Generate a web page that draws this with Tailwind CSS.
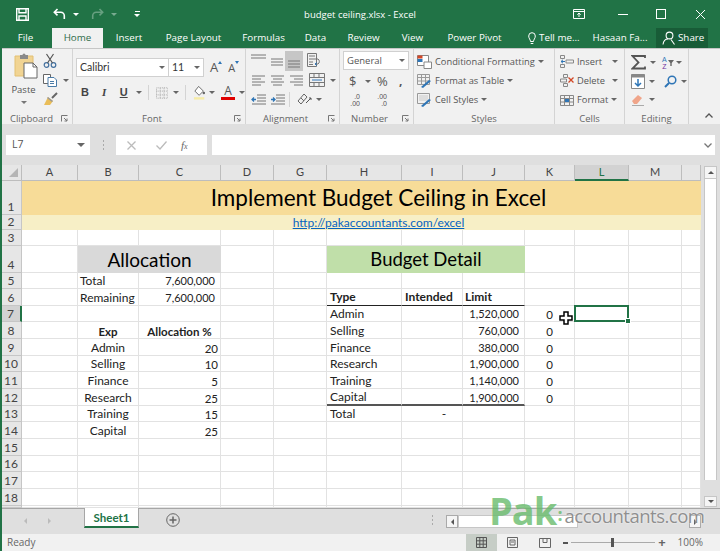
<!DOCTYPE html>
<html lang="en">
<head>
  <meta charset="UTF-8" />
  <title>budget ceiling.xlsx - Excel</title>
  <script src="https://cdn.jsdelivr.net/npm/@tailwindcss/browser@4"></script>
</head>
<body class="bg-white">
<div class="relative w-[720px] h-[551px] overflow-hidden flex flex-col border-l-2 border-[#217346] font-['Open_Sans',sans-serif] text-[#444]">

  <!-- Title bar -->
  <div class="h-[28px] -ml-[2px] bg-[#217346] grid grid-cols-[1fr_auto_1fr] items-center text-white">
    <div class="flex items-center pl-[16px]">
      <svg width="13" height="13" viewBox="0 0 13 13" fill="none" stroke="#fff" stroke-width="1.4"><path d="M.7.7h11.6v11.6H.7z"/><path d="M3 .7v4h7v-4M3 12.3V8h7v4.3"/></svg>
      <svg class="ml-[24px]" width="13" height="12" viewBox="0 0 13 12" fill="none" stroke="#fff" stroke-width="1.6"><path d="M4.5 1 1.3 4.2l3.2 3.2M1.5 4.2h6.3a3.5 3.5 0 0 1 3.5 3.5V11"/></svg>
      <i class="block ml-[7px] w-0 h-0 border-x-[3px] border-t-[3px] border-x-transparent border-t-white"></i>
      <svg class="ml-[12px] opacity-40" width="13" height="12" viewBox="0 0 13 12" fill="none" stroke="#cfe3d7" stroke-width="1.6"><path d="M8.5 1l3.2 3.2-3.2 3.2M11.5 4.2H5.2a3.5 3.5 0 0 0-3.5 3.5V11"/></svg>
      <i class="block ml-[7px] w-0 h-0 border-x-[3px] border-t-[3px] border-x-transparent border-t-white/40"></i>
      <div class="ml-[17px] flex flex-col items-center gap-[2px]"><i class="block w-[5px] h-px bg-white"></i><i class="block w-0 h-0 border-x-[3px] border-t-[3px] border-x-transparent border-t-white"></i></div>
    </div>
    <div class="text-[9.5px] leading-none pt-[2px]">budget ceiling.xlsx - Excel</div>
    <div class="flex items-center justify-end pr-[14px]">
      <svg width="12" height="10" viewBox="0 0 12 10" fill="none" stroke="#fff"><path d="M.5.5h11v9H.5zM.5 2.500h11M6 8V4M4.300 5.700 6 4l1.700 1.700"/></svg>
      <i class="block ml-[33px] w-[10px] h-px bg-white"></i>
      <i class="block ml-[28px] w-[10px] h-[10px] border border-white"></i>
      <svg class="ml-[29px]" width="11" height="11" viewBox="0 0 11 11" stroke="#fff"><path d="M1 1l9 9M10 1l-9 9"/></svg>
    </div>
  </div>

  <!-- Ribbon tabs -->
  <div class="h-[20px] -ml-[2px] bg-[#217346] flex items-stretch text-white text-[9.8px] leading-[20px]">
    <div class="w-[50px] pl-[1px] text-center">File</div>
    <div class="w-[51px] ml-[2px] bg-[#f1f1f1] text-[#2f6b4a] text-center">Home</div>
    <div class="w-[50px] ml-[1px] text-center">Insert</div>
    <div class="w-[77px] ml-[1px] text-center">Page Layout</div>
    <div class="w-[59px] ml-[2px] text-center">Formulas</div>
    <div class="w-[45px] text-center">Data</div>
    <div class="w-[49px] ml-[1px] text-center">Review</div>
    <div class="w-[47px] ml-[1px] text-center">View</div>
    <div class="w-[75px] ml-[1px] text-center">Power Pivot</div>
    <div class="w-[69px] ml-[2px] flex items-center gap-[3px] pl-[14px]">
      <svg class="shrink-0" width="8" height="13" viewBox="0 0 8 13" fill="none" stroke="#fff"><path d="M2.5 9.5C2.5 7.5.7 6.500.7 4a3.300 3.300 0 0 1 6.600 0c0 2.500-1.800 3.500-1.800 5.500zM2.700 11.500h2.600"/></svg>
      <span class="whitespace-nowrap">Tell me...</span>
    </div>
    <div class="w-[73px] pl-[1px] text-center whitespace-nowrap">Hasaan Fa...</div>
    <div class="w-[52px] bg-[#185c37] flex items-center pl-[6px] gap-[2px]">
      <svg class="shrink-0" width="14" height="14" viewBox="0 0 14 14" fill="none" stroke="#fff" stroke-width="1.100"><circle cx="7.500" cy="4.500" r="3.400"/><path d="M1 13.500c.5-3.500 2.500-5.500 5-5.500M9 8.500l3.500 5"/></svg>
      <span>Share</span>
    </div>
  </div>

  <!-- Ribbon -->
  <div class="h-[76px] bg-[#f1f1f1] border-t border-[#c6c6c6] flex text-[9.5px] leading-none">

    <!-- Clipboard -->
    <div class="relative w-[71px] pt-[4px] border-r border-[#d4d4d4] flex flex-col">
      <div class="h-[61px] flex pl-[10px]">
        <div class="w-[28px] flex flex-col items-center">
          <svg width="24" height="26" viewBox="0 0 24 26"><path d="M1 3h18v20H1z" fill="#f1d493" stroke="#e3c072"/><path d="M6 2h2.500a1.500 1.500 0 0 1 3 0H14v4H6z" fill="#8a8a8a"/><path d="M10 10h9l4 4v11H10z" fill="#fff" stroke="#666"/><path d="M19 10v4h4" fill="none" stroke="#666"/></svg>
          <span class="mt-[6px] -ml-[5px] text-[9.5px] text-[#555]">Paste</span>
          <i class="block mt-[6px] -ml-[5px] w-0 h-0 border-x-[3px] border-t-[3px] border-x-transparent border-t-[#777]"></i>
        </div>
        <div class="ml-[3px] flex flex-col gap-[5px]">
          <svg width="14" height="15" viewBox="0 0 14 15" fill="none" stroke="#44719f" stroke-width="1.200"><circle cx="3.500" cy="12" r="2.300"/><circle cx="10.500" cy="12" r="2.300"/><path d="M4.500 10 10.500 1M9.500 10 3.500 1" stroke="#555"/></svg>
          <div class="flex items-center gap-[6px]">
            <svg width="14" height="14" viewBox="0 0 14 14" fill="#fff" stroke="#666"><path d="M.5 1.500h7v9h-7z"/><path d="M5 4.500h6l2.500 2.500v6.500H5z" stroke="#4a7ba7"/><path d="M7 8.500h4M7 10.500h4" stroke="#4a7ba7"/></svg>
            <i class="block w-0 h-0 border-x-[3px] border-t-[3px] border-x-transparent border-t-[#666]"></i>
          </div>
          <svg width="15" height="14" viewBox="0 0 15 14"><path d="M14 1 9 6" stroke="#666" stroke-width="2"/><path d="M5 5l5 4-3 4H1z" fill="#e9bd59"/><path d="M5 5l5 4-1 1-5-4z" fill="#999"/></svg>
        </div>
      </div>
      <div class="text-center text-[#666] pr-[11px]">Clipboard</div>
      <svg class="absolute right-[4px] bottom-[2px]" width="7" height="7" viewBox="0 0 7 7" fill="none" stroke="#777"><path d="M.5 6.500v-6h6M3 3l3 3M6 3.500V6H3.500"/></svg>
    </div>

    <!-- Font -->
    <div class="relative w-[173px] border-r border-[#d4d4d4] flex flex-col">
      <div class="h-[65px] flex flex-col">
        <div class="flex items-center mt-[9px] pl-[3px]">
          <div class="w-[93px] h-[19px] bg-white border border-[#d0d0d0] flex items-center justify-between pl-[3px] pr-[3px] font-['Lato',sans-serif] text-[10.5px] text-[#333]">
            <span>Calibri</span><i class="block w-0 h-0 border-x-[3px] border-t-[3px] border-x-transparent border-t-[#666]"></i>
          </div>
          <div class="w-[35px] h-[19px] bg-white border-y border-r border-[#d0d0d0] flex items-center justify-between pl-[3px] pr-[3px] font-['Lato',sans-serif] text-[10.5px] text-[#333]">
            <span>11</span><i class="block w-0 h-0 border-x-[3px] border-t-[3px] border-x-transparent border-t-[#666]"></i>
          </div>
          <span class="ml-[6px] relative text-[13px] text-[#555]">A<i class="absolute -right-[4px] top-[0px] w-0 h-0 border-x-[2px] border-b-[3px] border-x-transparent border-b-[#2e75b6]"></i></span>
          <span class="ml-[10px] relative text-[11px] text-[#555]">A<i class="absolute -right-[4px] top-[-1px] w-0 h-0 border-x-[2px] border-t-[3px] border-x-transparent border-t-[#2e75b6]"></i></span>
        </div>
        <div class="flex items-center mt-[7px] h-[17px] text-[#444] text-[11px] font-['Liberation_Sans',sans-serif]">
          <b class="ml-[8px] w-[7px]">B</b>
          <i class="ml-[14px] w-[5px] font-['Liberation_Serif',serif] font-bold">I</i>
          <u class="ml-[13px] w-[8px] font-bold">U</u>
          <i class="block ml-[8px] w-0 h-0 border-x-[3px] border-t-[3px] border-x-transparent border-t-[#666]"></i>
          <i class="block ml-[6px] w-px h-[15px] bg-[#d4d4d4]"></i>
          <svg class="ml-[7px]" width="13" height="12" viewBox="0 0 13 12" fill="none" stroke="#aaa" stroke-dasharray="1 1"><path d="M.5.500h12v11H.5zM4.500.5v11M8.500.5v11M.5 4h12M.5 8h12"/></svg>
          <i class="block ml-[5px] w-0 h-0 border-x-[3px] border-t-[3px] border-x-transparent border-t-[#666]"></i>
          <i class="block ml-[6px] w-px h-[15px] bg-[#d4d4d4]"></i>
          <svg class="ml-[7px]" width="13" height="15" viewBox="0 0 13 15"><path d="M6 1l5 5-4.500 4.500L2 6z" fill="#fff" stroke="#666"/><circle cx="11.500" cy="8" r="1.300" fill="#666"/><path d="M1 12.500h11V15H1z" fill="#f7eca6"/></svg>
          <i class="block ml-[4px] w-0 h-0 border-x-[3px] border-t-[3px] border-x-transparent border-t-[#666]"></i>
          <div class="ml-[6px] w-[14px] h-[15px] flex flex-col items-center justify-between font-['Open_Sans',sans-serif] text-[12px] leading-[12px] text-[#555]"><span>A</span><i class="block w-[14px] h-[3px] bg-[#e00000]"></i></div>
          <i class="block ml-[4px] w-0 h-0 border-x-[3px] border-t-[3px] border-x-transparent border-t-[#666]"></i>
        </div>
      </div>
      <div class="text-center text-[#666] pr-[14px]">Font</div>
      <svg class="absolute right-[4px] bottom-[2px]" width="7" height="7" viewBox="0 0 7 7" fill="none" stroke="#777"><path d="M.5 6.500v-6h6M3 3l3 3M6 3.500V6H3.500"/></svg>
    </div>

    <!-- Alignment -->
    <div class="relative w-[94px] border-r border-[#d4d4d4] flex flex-col">
      <div class="h-[65px] flex flex-col pl-[5px] pt-[2px]">
        <div class="flex items-start h-[19px]">
          <svg class="mt-[3px]" width="15" height="9" viewBox="0 0 15 9" stroke="#777"><path d="M0 1h15M0 4h15"/></svg>
          <svg class="ml-[4px] mt-[7px]" width="14" height="8" viewBox="0 0 14 8" stroke="#777"><path d="M1 1h12M1 4h12M1 7h12"/></svg>
          <div class="ml-[1px] w-[18px] h-[20px] bg-[#c6c6c6] flex items-end justify-center pb-[3px]"><svg width="14" height="8" viewBox="0 0 14 8" stroke="#777"><path d="M1 1h12M1 4h12M1 7h12"/></svg></div>
          <svg class="ml-[4px] mt-[2px]" width="16" height="14" viewBox="0 0 16 14" fill="none"><path d="M.5.500h9v13h-9z" stroke="#777"/><path d="M2 3h6M2 6h9a3 3 0 0 1 0 5H8M2 9h4M2 11.500h4" stroke="#777"/><path d="M10 9.500l-2 1.500 2 1.500" stroke="#2e75b6"/></svg>
        </div>
        <div class="flex items-center h-[20px]">
          <svg width="15" height="11" viewBox="0 0 15 11" stroke="#777"><path d="M1 1h13M1 4h9M1 7h13M1 10h9"/></svg>
          <svg class="ml-[4px]" width="15" height="11" viewBox="0 0 15 11" stroke="#777"><path d="M1 1h13M3 4h9M1 7h13M3 10h9"/></svg>
          <svg class="ml-[4px]" width="15" height="11" viewBox="0 0 15 11" stroke="#777"><path d="M1 1h13M5 4h9M1 7h13M5 10h9"/></svg>
          <svg class="ml-[5px]" width="16" height="14" viewBox="0 0 16 14" fill="none" stroke="#777"><path d="M.5.500h15v13H.5zM.5 4.500h15M.5 9.500h15M5 .5v4M10 .5v4M5 9.500v4M10 9.500v4"/><path d="M3 7h10" stroke="#2e75b6"/></svg>
          <i class="block ml-[5px] w-0 h-0 border-x-[3px] border-t-[3px] border-x-transparent border-t-[#666]"></i>
        </div>
        <div class="flex items-center h-[18px]">
          <svg width="15" height="11" viewBox="0 0 15 11"><path d="M6 1h9M6 4h9M6 7h9M1 10h14" stroke="#777"/><path d="M5 5.500H1M3 3.500 1 5.500l2 2" fill="none" stroke="#2e75b6" stroke-width="1.300"/></svg>
          <svg class="ml-[4px]" width="15" height="11" viewBox="0 0 15 11"><path d="M6 1h9M6 4h9M6 7h9M1 10h14" stroke="#777"/><path d="M1 5.500h4M3 3.500l2 2-2 2" fill="none" stroke="#2e75b6" stroke-width="1.300"/></svg>
          <i class="block ml-[4px] w-px h-[15px] bg-[#d4d4d4]"></i>
          <svg class="ml-[7px]" width="15" height="14" viewBox="0 0 15 14" fill="none" stroke="#666"><path d="M1 9l6-7 3 3-6 7zM4 6l3 3"/><path d="M9 11l5-5M12 6h2v2" stroke="#555"/></svg>
          <i class="block ml-[4px] w-0 h-0 border-x-[3px] border-t-[3px] border-x-transparent border-t-[#666]"></i>
        </div>
      </div>
      <div class="text-center text-[#666] pr-[14px]">Alignment</div>
      <svg class="absolute right-[4px] bottom-[2px]" width="7" height="7" viewBox="0 0 7 7" fill="none" stroke="#777"><path d="M.5 6.500v-6h6M3 3l3 3M6 3.500V6H3.500"/></svg>
    </div>

    <!-- Number -->
    <div class="relative w-[74px] border-r border-[#d4d4d4] flex flex-col">
      <div class="h-[65px] flex flex-col pl-[3px]">
        <div class="mt-[2px] w-[66px] h-[19px] bg-white border border-[#d0d0d0] flex items-center justify-between pl-[3px] pr-[3px] text-[9.5px] text-[#555]">
          <span>General</span><i class="block w-0 h-0 border-x-[3px] border-t-[3px] border-x-transparent border-t-[#666]"></i>
        </div>
        <div class="flex items-center h-[20px] mt-[1px] text-[#555]">
          <span class="ml-[6px] w-[9px] text-[13px]">$</span>
          <i class="block ml-[7px] w-0 h-0 border-x-[3px] border-t-[3px] border-x-transparent border-t-[#666]"></i>
          <span class="ml-[6px] w-[15px] text-[13px]">%</span>
          <b class="ml-[7px] text-[12px] leading-[8px]">,</b>
        </div>
        <div class="flex items-center h-[17px] font-['Liberation_Sans',sans-serif] text-[7px] leading-[7px] text-[#555]">
          <div class="ml-[3px] flex flex-col items-end w-[14px]"><span>.0</span><span>.00</span></div>
          <div class="ml-[13px] flex flex-col items-end w-[14px]"><span>.00</span><span>.0</span></div>
        </div>
      </div>
      <div class="text-center text-[#666] pr-[14px]">Number</div>
      <svg class="absolute right-[4px] bottom-[2px]" width="7" height="7" viewBox="0 0 7 7" fill="none" stroke="#777"><path d="M.5 6.500v-6h6M3 3l3 3M6 3.500V6H3.500"/></svg>
    </div>

    <!-- Styles -->
    <div class="w-[141px] border-r border-[#d4d4d4] flex flex-col">
      <div class="h-[65px] flex flex-col pl-[3px] pt-[3px] text-[9.3px] text-[#555]">
        <div class="flex items-center h-[19px] gap-[3px]">
          <svg width="15" height="14" viewBox="0 0 15 14" fill="#fff" stroke="#888"><path d="M.5.500h11v10H.5z"/><path d="M.5.500h5v3h-5z" fill="#d24726" stroke="none"/><path d="M.5 4h5v3h-5z" fill="#2e75b6" stroke="none"/><path d="M7 7h7.500v6.500H7z"/></svg>
          <span class="whitespace-nowrap">Conditional Formatting</span>
          <i class="block w-0 h-0 border-x-[3px] border-t-[3px] border-x-transparent border-t-[#666]"></i>
        </div>
        <div class="flex items-center h-[19px] gap-[3px]">
          <svg width="15" height="14" viewBox="0 0 15 14" fill="none" stroke="#999"><path d="M.5.500h12v10H.5zM.5 3.500h12M.5 7h12M4.500.5v10M8.500.5v10"/><path d="M4 13l8-7 2 1-8 7z" fill="#2e75b6" stroke="none"/></svg>
          <span class="whitespace-nowrap">Format as Table</span>
          <i class="block w-0 h-0 border-x-[3px] border-t-[3px] border-x-transparent border-t-[#666]"></i>
        </div>
        <div class="flex items-center h-[19px] gap-[3px]">
          <svg width="15" height="14" viewBox="0 0 15 14" fill="none" stroke="#999"><path d="M.5.500h12v10H.5z"/><path d="M2 2h9v6H2z" fill="#ddd" stroke="none"/><path d="M4 13l8-7 2 1-8 7z" fill="#2e75b6" stroke="none"/></svg>
          <span class="whitespace-nowrap">Cell Styles</span>
          <i class="block w-0 h-0 border-x-[3px] border-t-[3px] border-x-transparent border-t-[#666]"></i>
        </div>
      </div>
      <div class="text-center text-[#666]">Styles</div>
    </div>

    <!-- Cells -->
    <div class="w-[70px] border-r border-[#d4d4d4] flex flex-col">
      <div class="h-[65px] flex flex-col pl-[5px] pt-[3px] text-[9.3px] text-[#555]">
        <div class="flex items-center h-[19px] gap-[3px]">
          <svg width="14" height="13" viewBox="0 0 14 13" fill="none" stroke="#888"><path d="M.5.500h4v3h-4zM.5 9.500h4v3h-4zM6 5h7.500v3H6z"/><path d="M1 6.500h4M3 4.800 1 6.500l2 1.700" stroke="#2e75b6"/></svg>
          <span class="w-[32px]">Insert</span>
          <i class="block w-0 h-0 border-x-[3px] border-t-[3px] border-x-transparent border-t-[#666]"></i>
        </div>
        <div class="flex items-center h-[19px] gap-[3px]">
          <svg width="14" height="13" viewBox="0 0 14 13" fill="none" stroke="#888"><path d="M3.500.5h4v3h-4zM3.500 9.500h4v3h-4zM.5 5h6v3h-6z"/><path d="M8.500 3.500l5 5M13.500 3.500l-5 5" stroke="#d24726" stroke-width="1.300"/></svg>
          <span class="w-[32px]">Delete</span>
          <i class="block w-0 h-0 border-x-[3px] border-t-[3px] border-x-transparent border-t-[#666]"></i>
        </div>
        <div class="flex items-center h-[19px] gap-[3px]">
          <svg width="14" height="13" viewBox="0 0 14 13" fill="none" stroke="#888"><path d="M.5 2.500h13v10H.5zM.5 5.500h13M.5 9h13M4.500 2.500v10M9.500 2.500v10"/><path d="M5 6h4v3H5z" fill="#2e75b6" stroke="none"/></svg>
          <span>Format</span>
          <i class="block w-0 h-0 border-x-[3px] border-t-[3px] border-x-transparent border-t-[#666]"></i>
        </div>
      </div>
      <div class="text-center text-[#666]">Cells</div>
    </div>

    <!-- Editing -->
    <div class="w-[64px] border-r border-[#d4d4d4] flex flex-col">
      <div class="h-[65px] flex flex-col pl-[6px] pt-[4px]">
        <div class="flex items-center h-[19px]">
          <svg width="15" height="15" viewBox="0 0 15 15" fill="none" stroke="#555" stroke-width="1.800"><path d="M14 3V1H1.500l6 6.500-6 6H14v-2"/></svg>
          <i class="block ml-[4px] w-0 h-0 border-x-[3px] border-t-[3px] border-x-transparent border-t-[#666]"></i>
          <div class="ml-[6px] flex flex-col items-center font-['Liberation_Sans',sans-serif] text-[7px] leading-[7px]"><span class="text-[#2e75b6]">A</span><span class="text-[#7030a0]">Z</span></div>
          <svg class="ml-[1px]" width="6" height="6" viewBox="0 0 6 6" fill="#666"><path d="M0 0h6L3.700 3v3H2.300V3z"/></svg>
          <i class="block ml-[2px] w-0 h-0 border-x-[3px] border-t-[3px] border-x-transparent border-t-[#666]"></i>
        </div>
        <div class="flex items-center h-[19px]">
          <svg width="14" height="15" viewBox="0 0 14 15"><path d="M.5.500h13v14H.5z" fill="#fff" stroke="#888"/><path d="M.5.500h13v3H.5z" fill="#888"/><path d="M7 5v7M4 9l3 3 3-3" fill="none" stroke="#2e75b6" stroke-width="1.500"/></svg>
          <i class="block ml-[4px] w-0 h-0 border-x-[3px] border-t-[3px] border-x-transparent border-t-[#666]"></i>
          <svg class="ml-[9px]" width="13" height="13" viewBox="0 0 13 13" fill="none" stroke="#2e75b6" stroke-width="1.500"><circle cx="8" cy="5" r="3.800"/><path d="M5 8l-4 4" stroke-width="2"/></svg>
          <i class="block ml-[4px] w-0 h-0 border-x-[3px] border-t-[3px] border-x-transparent border-t-[#666]"></i>
        </div>
        <div class="flex items-center h-[17px]">
          <svg width="14" height="13" viewBox="0 0 14 13"><path d="M1 8l6-6 4 3-5 6H3z" fill="#f0a58a"/><path d="M1 12.500h12" stroke="#aaa"/></svg>
          <i class="block ml-[4px] w-0 h-0 border-x-[3px] border-t-[3px] border-x-transparent border-t-[#666]"></i>
        </div>
      </div>
      <div class="text-center text-[#666]">Editing</div>
    </div>
    <div class="flex-1 flex items-end justify-center pb-[6px] pl-[8px]">
      <svg width="8" height="5" viewBox="0 0 8 5" fill="none" stroke="#555" stroke-width="1.300"><path d="M.5 4.500 4 1l3.500 3.500"/></svg>
    </div>
  </div>

  <!-- Formula bar -->
  <div class="h-[41px] bg-[#dfdfdf] flex items-start pt-[11px] pl-[4px]">
    <div class="w-[84px] h-[20px] bg-white flex items-center justify-between pl-[6px] pr-[5px] text-[10.500px] text-[#555]">
      <span>L7</span><i class="block w-0 h-0 border-x-[4px] border-t-[4px] border-x-transparent border-t-[#666]"></i>
    </div>
    <div class="w-[26px] h-[20px] flex flex-col items-center justify-center gap-[2px]">
      <i class="block w-[1px] h-[2px] bg-[#aaa]"></i><i class="block w-[1px] h-[2px] bg-[#aaa]"></i><i class="block w-[1px] h-[2px] bg-[#aaa]"></i>
    </div>
    <div class="w-[91px] h-[20px] bg-white flex items-center pl-[11px]">
      <svg width="9" height="9" viewBox="0 0 9 9" stroke="#bbb" stroke-width="1.300"><path d="M.5.500l8 8M8.500.5l-8 8"/></svg>
      <svg class="ml-[20px]" width="11" height="9" viewBox="0 0 11 9" fill="none" stroke="#bbb" stroke-width="1.300"><path d="M.5 4.500 4 8l6.500-7.500"/></svg>
      <i class="ml-[14px] font-['Liberation_Serif',serif] text-[11px] text-[#666]">f<span class="text-[8px]">x</span></i>
    </div>
    <div class="ml-[5px] w-[503px] h-[20px] bg-white flex items-center justify-end pr-[3px]">
      <svg width="8" height="5" viewBox="0 0 8 5" fill="none" stroke="#777" stroke-width="1.300"><path d="M.5.500 4 4 7.500.5"/></svg>
    </div>
  </div>

  <!-- Sheet and vertical scrollbar -->
  <div class="h-[344px] flex bg-[#dfdfdf] border-b border-[#a6a6a6]">
    <div id="sheet" class="w-[699px] h-[343px] overflow-hidden grid grid-cols-[20px_56px_61px_82px_53px_53px_75px_61px_62px_50px_54px_53px_19px] grid-rows-[16px_34px_15px_16px_27px_16px_17px_16px_17px_17px_16px_17px_17px_16px_17px_17px_16px_17px_17px_2px] font-['Lato',sans-serif] text-[12px] text-[#222] bg-white"></div>
    <div class="ml-[3px] w-[13px] h-[343px] flex flex-col">
      <div class="mt-[1px] h-[13px] bg-[#f5f5f5] border border-[#c6c6c6] flex items-center justify-center"><i class="block w-0 h-0 border-x-[3px] border-b-[3px] border-x-transparent border-b-[#555]"></i></div>
      <div class="h-[301px] bg-white border-x border-[#c6c6c6]"></div>
      <div class="flex-1"></div>
      <div class="h-[11px] mb-[1px] bg-[#f5f5f5] border border-[#c6c6c6] flex items-center justify-center"><i class="block w-0 h-0 border-x-[3px] border-t-[3px] border-x-transparent border-t-[#555]"></i></div>
    </div>
  </div>

  <!-- Sheet tabs and horizontal scrollbar -->
  <div class="h-[25px] bg-[#dfdfdf] flex items-start">
    <i class="block ml-[22px] mt-[9px] w-0 h-0 border-y-[3px] border-r-[3px] border-y-transparent border-r-[#bbb]"></i>
    <i class="block ml-[21px] mt-[9px] w-0 h-0 border-y-[3px] border-l-[3px] border-y-transparent border-l-[#bbb]"></i>
    <div class="ml-[33px] w-[55px] h-[20px] -mt-px bg-white border-x border-b-2 border-x-[#a6a6a6] border-b-[#217346] text-center text-[11.500px] leading-[19px] font-['Lato',sans-serif] font-bold text-[#217346]">Sheet1</div>
    <svg class="ml-[27px] mt-[4px]" width="14" height="14" viewBox="0 0 14 14" fill="none" stroke="#666"><circle cx="7" cy="7" r="6.300"/><path d="M3.500 7h7M7 3.500v7" stroke-width="1.500"/></svg>
    <div class="ml-[252px] mt-[6px] flex flex-col gap-[2px]"><i class="block w-px h-[2px] bg-[#aaa]"></i><i class="block w-px h-[2px] bg-[#aaa]"></i><i class="block w-px h-[2px] bg-[#aaa]"></i></div>
    <div class="ml-[13px] mt-[6px] w-[12px] h-[13px] bg-[#f5f5f5] border border-[#aaa] flex items-center justify-center"><i class="block w-0 h-0 border-y-[3px] border-r-[3px] border-y-transparent border-r-[#555]"></i></div>
    <div class="mt-[6px] w-[120px] h-[13px] bg-white border border-[#c6c6c6]"></div>
    <div class="ml-[111px] mt-[6px] w-[12px] h-[13px] bg-[#f5f5f5] border border-[#aaa] flex items-center justify-center"><i class="block w-0 h-0 border-y-[3px] border-l-[3px] border-y-transparent border-l-[#555]"></i></div>
  </div>

  <!-- Status bar -->
  <div class="h-[17px] bg-[#f1f1f1] flex items-stretch text-[10px] text-[#666] leading-[17px]">
    <span class="pl-[5px]">Ready</span>
    <div class="ml-auto flex items-center">
      <div class="w-[31px] h-[17px] bg-[#c6cdc6] flex items-center justify-center">
        <svg width="11" height="11" viewBox="0 0 11 11" fill="none" stroke="#555"><path d="M.5.500h10v10H.5zM3.800.5v10M7.200.5v10M.5 3.800h10M.5 7.200h10"/></svg>
      </div>
      <svg class="ml-[10px]" width="11" height="11" viewBox="0 0 11 11" fill="none" stroke="#666"><path d="M.5.500h10v10H.5z"/><path d="M3 3h5v5H3zM4 5h3"/></svg>
      <svg class="ml-[21px]" width="12" height="10" viewBox="0 0 12 10" fill="none" stroke="#666"><path d="M.5.500h11v9H.5zM4 .5v4h4v-4"/></svg>
      <i class="block ml-[12px] w-[5px] h-[2px] bg-[#555]"></i>
      <div class="relative ml-[3px] w-[84px] h-px bg-[#aaa]"><i class="absolute left-[40px] -top-[4px] w-[3px] h-[9px] bg-[#555]"></i></div>
      <span class="ml-[3px] text-[13px] font-bold leading-none">+</span>
      <span class="ml-[12px] mr-[17px] text-[10px]">100%</span>
    </div>
  </div>

  <!-- Watermark -->
  <div class="absolute left-[487px] top-[490px] flex items-end pointer-events-none">
    <span class="font-['Open_Sans',sans-serif] font-bold text-[38px] leading-[40px] tracking-[-1px] text-[#66bb6a]/80">Pak</span>
    <span class="ml-[1px] mb-[6px] font-['Open_Sans',sans-serif] font-bold text-[18px] leading-[20px] text-[#66bb6a]/80">:</span>
    <span class="ml-[2px] mb-[4px] font-['Open_Sans',sans-serif] text-[18.500px] leading-[20px] tracking-[-0.5px] text-[#8f8f8f] [text-shadow:0_0_2px_#fff]">accountants.com</span>
  </div>
</div>

<script>
  // column letters, E and F are hidden in this sheet
  const letters = ['A', 'B', 'C', 'D', 'G', 'H', 'I', 'J', 'K', 'L', 'M', ''];
  const rowCount = 19;

  const cellBase = 'relative border-r border-b border-[#e2e2e2] whitespace-nowrap leading-none flex items-end px-[2px] min-w-0';
  const rowHead = 'bg-[#e6e6e6] border-r border-b border-[#c6c6c6] flex items-end justify-center pb-[1px] pr-[1px] text-[12px] leading-none text-[#444]';
  const colHead = 'bg-[#e6e6e6] border-r border-b border-[#bdbdbd] flex items-center justify-center text-[11px] text-[#444]';
  const dataLeft = 'justify-start pl-[3px] pb-[1px]';
  const right = 'justify-end text-[11.500px] pb-[1px]';
  const center = 'justify-center pb-[1px]';
  const money = 'justify-end pr-[5px] text-[11px] pb-[2px]';
  const zero = 'justify-end pr-[21px] text-[11.500px] pb-[1px]';

  // col index is 0 for A, up to 11
  const cells = {
    '5,1': ['Total', 'justify-start pb-[1px]'], '5,2': ['7,600,000', money],
    '6,1': ['Remaining', 'justify-start pb-[1px]'], '6,2': ['7,600,000', money],
    '6,5': ['Type', 'pl-[3px] pb-[2px] font-bold border-b-[#222]'], '6,6': ['Intended', 'pl-[3px] pb-[2px] font-bold border-b-[#222]'], '6,7': ['Limit', 'pb-[2px] font-bold border-b-[#222]'],
    '7,5': ['Admin', dataLeft], '7,7': ['1,520,000', money], '7,8': ['0', zero],
    '8,1': ['Exp', 'justify-center pb-[1px] font-bold text-[11.500px]'], '8,2': ['Allocation %', 'justify-center pb-[1px] font-bold text-[11.500px]'],
    '8,5': ['Selling', dataLeft], '8,7': ['760,000', money], '8,8': ['0', zero],
    '9,1': ['Admin', center], '9,2': ['20', right],
    '9,5': ['Finance', dataLeft], '9,7': ['380,000', money], '9,8': ['0', zero],
    '10,1': ['Selling', center], '10,2': ['10', right],
    '10,5': ['Research', dataLeft], '10,7': ['1,900,000', money], '10,8': ['0', zero],
    '11,1': ['Finance', center], '11,2': ['5', right],
    '11,5': ['Training', dataLeft], '11,7': ['1,140,000', money], '11,8': ['0', zero],
    '12,1': ['Research', center], '12,2': ['25', right],
    '12,5': ['Capital', 'pl-[3px] pb-[1px] border-b-2 border-b-[#555]'], '12,6': ['', 'border-b-2 border-b-[#555]'], '12,7': ['1,900,000', 'justify-end pr-[5px] pb-[1px] text-[11px] border-b-2 border-b-[#555]'], '12,8': ['0', zero],
    '13,1': ['Training', center], '13,2': ['15', right],
    '13,5': ['Total', dataLeft], '13,6': ['-', 'justify-center pl-[26px] pb-[1px]'],
    '14,1': ['Capital', center], '14,2': ['25', right],
  };

  const sheet = document.getElementById('sheet');
  let html = '';

  function add(cls, text) {
    html += `<div class="${cls}">${text || ''}</div>`;
  }

  // header row with the corner triangle
  html += `<div class="bg-[#e6e6e6] border-r border-b border-[#bdbdbd] flex items-end justify-end pr-[3px] pb-[3px]"><svg width="9" height="9" viewBox="0 0 9 9"><path d="M9 0v9H0z" fill="#b5b5b5"/></svg></div>`;
  letters.forEach((l, i) => {
    if (i === 9) add('bg-[#d2d2d2] border-r border-b-2 border-r-[#bdbdbd] border-b-[#217346] flex items-center justify-center text-[11px] text-[#217346]', l);
    else add(colHead, l);
  });

  for (let r = 1; r <= rowCount; r++) {
    const label = r === 19 ? '' : r;
    if (r === 7) add('bg-[#d2d2d2] border-r-2 border-b border-r-[#217346] border-b-[#c6c6c6] flex items-end justify-center pb-[1px] pr-[1px] text-[12px] leading-none text-[#444]', label);
    else add(rowHead, label);

    if (r === 1) {
      add('col-span-12 bg-[#f7dc98] flex items-center justify-center text-[22.500px] leading-none text-black pl-[34px] whitespace-nowrap', 'Implement Budget Ceiling in Excel');
      continue;
    }
    if (r === 2) {
      add('col-span-12 bg-[#f7efc6] flex items-center justify-center text-[12px] leading-none text-[#0563c1] underline pl-[34px]', 'http://pakaccountants.com/excel');
      continue;
    }
    if (r === 4) {
      add(cellBase);
      add('col-span-2 bg-[#d9d9d9] flex items-center justify-center text-[19px] leading-none text-black', 'Allocation');
      add(cellBase); add(cellBase);
      add('col-span-3 bg-[#c0dfa9] flex items-center justify-center text-[18.500px] leading-none text-black pb-[1px]', 'Budget Detail');
      for (let c = 8; c < 12; c++) add(cellBase);
      continue;
    }
    for (let c = 0; c < 12; c++) {
      const cell = cells[r + ',' + c];
      if (r === 7 && c === 9) {
        add(cellBase + ' z-10', '<div class="absolute -left-px -top-px -right-px -bottom-px border-2 border-[#217346]"><i class="absolute -right-[4px] -bottom-[4px] w-[6px] h-[6px] bg-[#217346] border border-white"></i></div><svg class="absolute -left-[16px] top-[5px]" width="14" height="14" viewBox="0 0 14 14"><path d="M5 1h4v4h4v4H9v4H5V9H1V5h4z" fill="#fff" stroke="#000" stroke-width="1.500"/></svg>');
      } else if (cell) {
        add(cellBase + ' ' + cell[1], cell[0]);
      } else {
        add(cellBase);
      }
    }
  }
  sheet.innerHTML = html;
</script>
</body>
</html>
